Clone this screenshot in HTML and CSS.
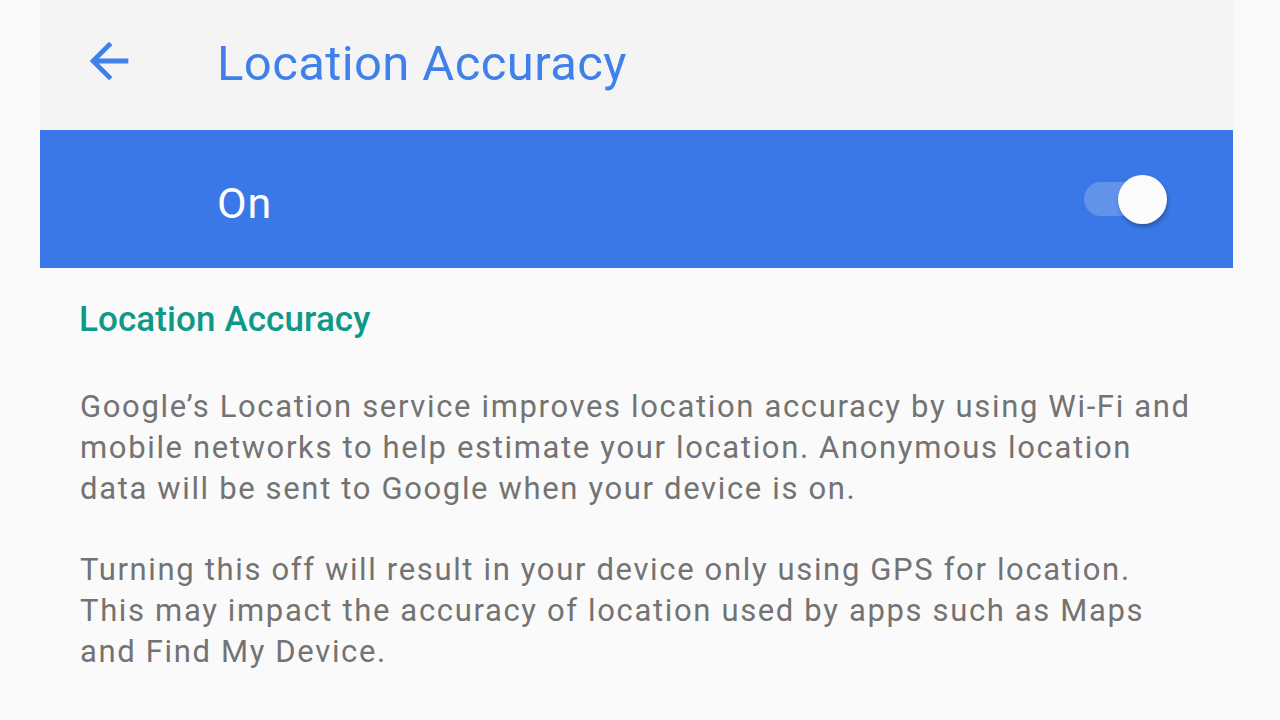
FILE: index.html
```html
<!DOCTYPE html>
<html lang="en">
<head>
<meta charset="utf-8">
<title>Location Accuracy</title>
<link rel="stylesheet" href="styles.css">
</head>
<body>
<div class="panel">
  <header class="appbar">
    <svg class="back" viewBox="0 0 24 24" aria-hidden="true"><path d="M20 11H7.83l5.59-5.59L12 4l-8 8 8 8 1.41-1.41L7.83 13H20v-2z"/></svg>
    <h1 class="title">Location Accuracy</h1>
  </header>
  <div class="master">
    <span class="master-label">On</span>
    <span class="switch"><span class="thumb"></span></span>
  </div>
  <main class="content">
    <h2 class="section">Location Accuracy</h2>
    <p class="text">Google’s Location service improves location accuracy by using Wi-Fi and<br>mobile networks to help estimate your location. Anonymous location<br>data will be sent to Google when your device is on.</p>
    <p class="text">Turning this off will result in your device only using GPS for location.<br>This may impact the accuracy of location used by apps such as Maps<br>and Find My Device.</p>
  </main>
</div>
</body>
</html>
```

FILE: styles.css
```css
html, body {
  margin: 0;
  padding: 0;
  height: 100%;
  background: #f9f9f9;
  font-family: Roboto, "Noto Sans", "Liberation Sans", sans-serif;
  overflow: hidden;
}

.panel {
  width: 1193px;
  margin-left: 40px;
  height: 720px;
  display: flex;
  flex-direction: column;
  background: #fafafa;
}

.appbar {
  height: 130px;
  display: flex;
  align-items: center;
  background: #f4f4f4;
  flex: none;
}

.back {
  width: 58px;
  height: 58px;
  margin-left: 40px;
  margin-bottom: 8px;
  fill: #4080ea;
  flex: none;
}

.title {
  margin: 0 0 0 79px;
  padding-bottom: 3px;
  font-size: 49px;
  font-weight: 400;
  letter-spacing: 0.4px;
  line-height: 60px;
  color: #4080ea;
}

.master {
  height: 138px;
  display: flex;
  align-items: center;
  background: #3b78e7;
  flex: none;
  padding: 0 66px 0 177px;
}

.master-label {
  flex: 1;
  padding-top: 8px;
  font-size: 43px;
  letter-spacing: 1px;
  line-height: 50px;
  color: #ffffff;
}

.switch {
  position: relative;
  width: 83px;
  height: 34px;
  border-radius: 17px;
  background: rgba(255, 255, 255, 0.2);
  flex: none;
}

.thumb {
  position: absolute;
  right: 0;
  top: -7.5px;
  width: 49px;
  height: 49px;
  border-radius: 50%;
  background: #fbfbfb;
  box-shadow: 1px 3px 4px rgba(0, 0, 0, 0.28);
}

.content {
  padding: 31px 40px 0 40px;
  flex: 1;
}

.section {
  margin: 0 0 45px -1px;
  font-size: 35px;
  font-weight: 500;
  letter-spacing: 0.1px;
  line-height: 42px;
  color: #0d9887;
}

.text {
  margin: 0 0 40px;
  font-size: 31px;
  letter-spacing: 1.65px;
  line-height: 41px;
  color: #737373;
  white-space: nowrap;
}
```
